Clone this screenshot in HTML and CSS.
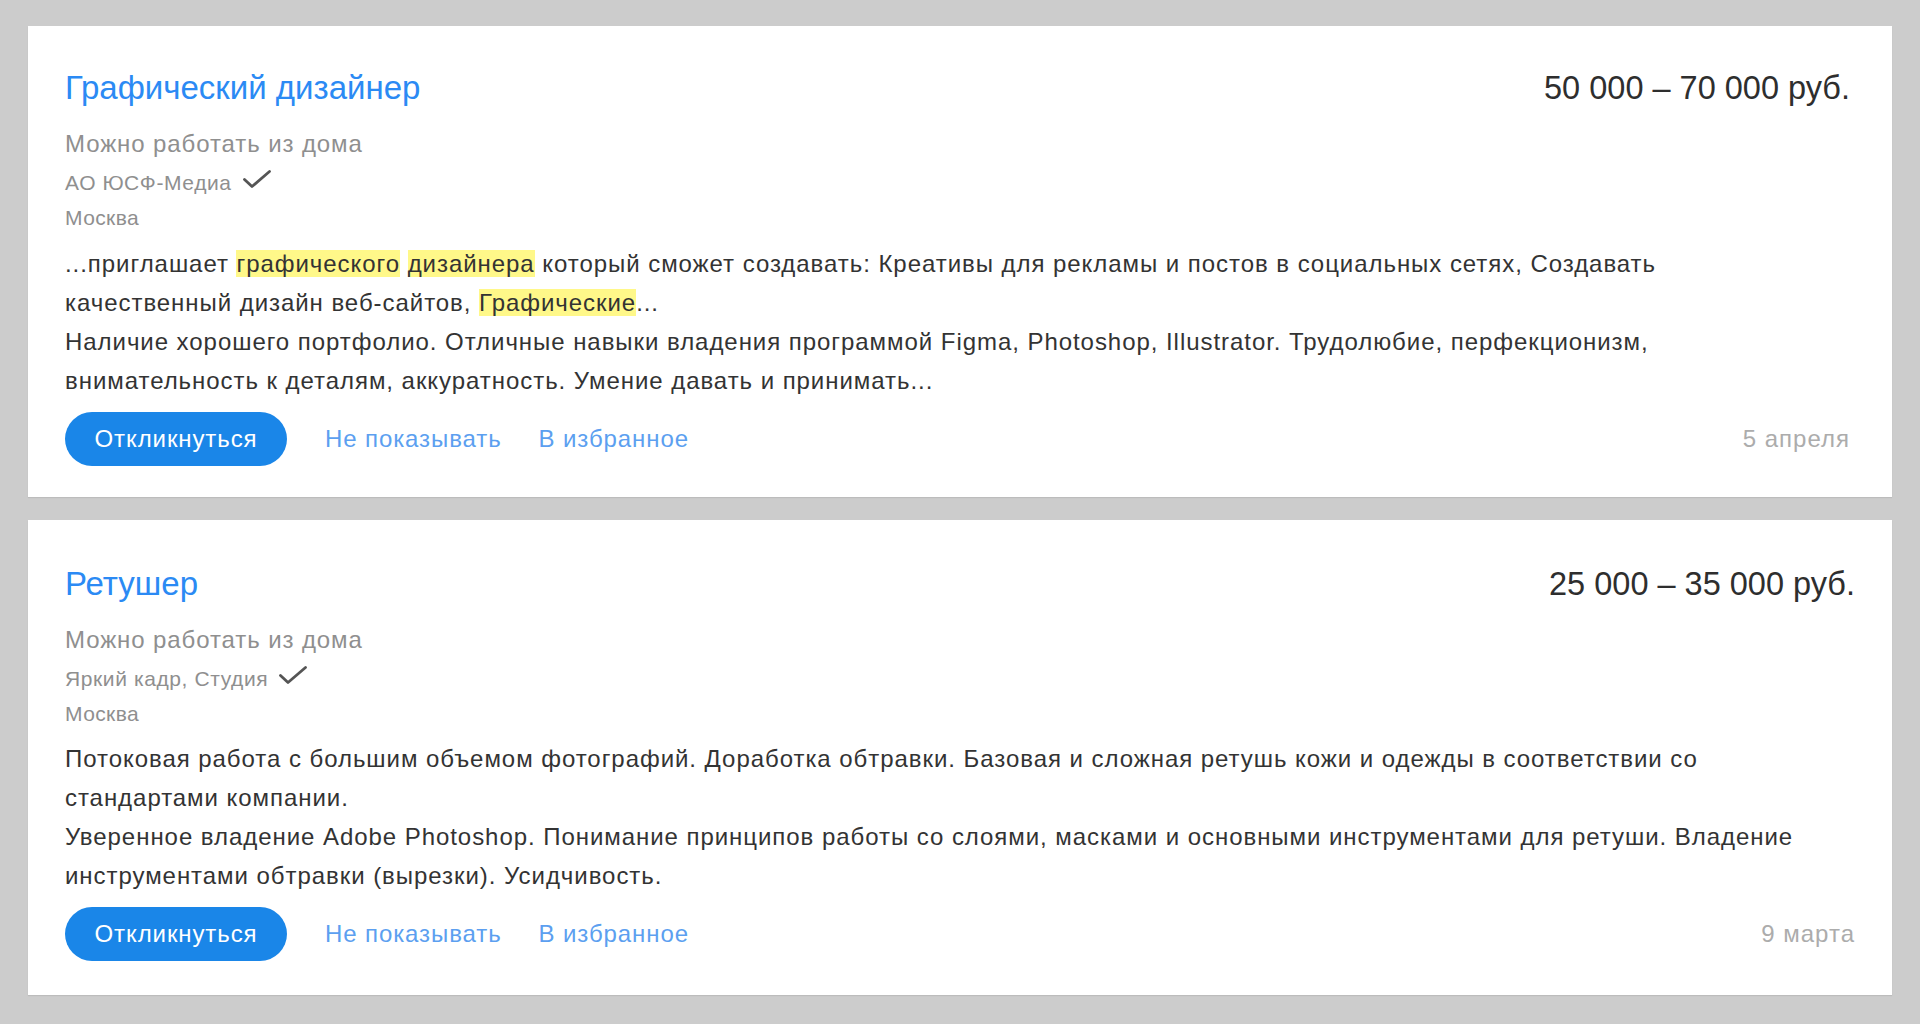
FILE: index.html
```html
<!DOCTYPE html>
<html lang="ru">
<head>
<meta charset="utf-8">
<title>Вакансии</title>
<link rel="stylesheet" href="styles.css">
</head>
<body>
<main class="page">
  <article class="vacancy vacancy--first">
    <div class="vacancy__head">
      <a class="vacancy__title" href="#">Графический дизайнер</a>
      <div class="vacancy__salary">50&nbsp;000 – 70&nbsp;000 руб.</div>
    </div>
    <div class="vacancy__remote">Можно работать из дома</div>
    <div class="vacancy__company">АО ЮСФ-Медиа<svg class="check" viewBox="0 0 28 18" width="28" height="18"><path d="M1.5 9.5 L9 16.5 L26.5 1.5" fill="none" stroke="#555" stroke-width="2.8" stroke-linecap="round" stroke-linejoin="round"/></svg></div>
    <div class="vacancy__city">Москва</div>
    <div class="vacancy__desc">
      <p>...приглашает <mark>графического</mark> <mark>дизайнера</mark> который сможет создавать: Креативы для рекламы и постов в социальных сетях, Создавать качественный дизайн веб-сайтов, <mark>Графические</mark>...</p>
      <p>Наличие хорошего портфолио. Отличные навыки владения программой Figma, Photoshop, Illustrator. Трудолюбие, перфекционизм, внимательность к деталям, аккуратность. Умение давать и принимать...</p>
    </div>
    <div class="vacancy__actions">
      <button class="btn" type="button">Откликнуться</button>
      <a class="action-link" href="#">Не показывать</a>
      <a class="action-link" href="#">В избранное</a>
      <span class="vacancy__date">5 апреля</span>
    </div>
  </article>

  <article class="vacancy vacancy--second">
    <div class="vacancy__head">
      <a class="vacancy__title" href="#">Ретушер</a>
      <div class="vacancy__salary">25&nbsp;000 – 35&nbsp;000 руб.</div>
    </div>
    <div class="vacancy__remote">Можно работать из дома</div>
    <div class="vacancy__company">Яркий кадр, Студия<svg class="check" viewBox="0 0 28 18" width="28" height="18"><path d="M1.5 9.5 L9 16.5 L26.5 1.5" fill="none" stroke="#555" stroke-width="2.8" stroke-linecap="round" stroke-linejoin="round"/></svg></div>
    <div class="vacancy__city">Москва</div>
    <div class="vacancy__desc">
      <p>Потоковая работа с большим объемом фотографий. Доработка обтравки. Базовая и сложная ретушь кожи и одежды в соответствии со стандартами компании.</p>
      <p>Уверенное владение Adobe Photoshop. Понимание принципов работы со слоями, масками и основными инструментами для ретуши. Владение инструментами обтравки (вырезки). Усидчивость.</p>
    </div>
    <div class="vacancy__actions">
      <button class="btn" type="button">Откликнуться</button>
      <a class="action-link" href="#">Не показывать</a>
      <a class="action-link" href="#">В избранное</a>
      <span class="vacancy__date">9 марта</span>
    </div>
  </article>
</main>
</body>
</html>
```

FILE: styles.css
```css
html, body {
  margin: 0;
  padding: 0;
}

body {
  background: #cccccc;
  font-family: "Liberation Sans", Arial, sans-serif;
  color: #333333;
}

.page {
  display: flex;
  flex-direction: column;
  gap: 23px;
  padding: 26px 28px 28px 28px;
}

.vacancy {
  background: #ffffff;
  padding: 42px 42px 31px 37px;
  box-shadow: 0 1px 1px rgba(0, 0, 0, 0.08);
}

.vacancy--second {
  padding-right: 37px;
  padding-top: 44px;
  padding-bottom: 34px;
}

.vacancy__head {
  display: flex;
  justify-content: space-between;
  align-items: baseline;
  height: 40px;
  margin-bottom: 18px;
}

.vacancy__title {
  font-size: 33px;
  line-height: 40px;
  color: #2b8af4;
  text-decoration: none;
}

.vacancy__salary {
  font-size: 32.5px;
  line-height: 40px;
  color: #2e2e2e;
}

.vacancy__remote {
  font-size: 24px;
  line-height: 36px;
  letter-spacing: 0.9px;
  color: #8f8f8f;
  margin-bottom: 3px;
}

.vacancy__company,
.vacancy__city {
  font-size: 21px;
  line-height: 35px;
  color: #8f8f8f;
}

.vacancy__company {
  display: flex;
  align-items: center;
  letter-spacing: 0.6px;
}

.vacancy__city {
  letter-spacing: 0.4px;
}

.check {
  margin-left: 11px;
  margin-top: -8px;
}

.vacancy__desc {
  max-width: 1740px;
  margin-top: 9px;
  font-size: 24px;
  line-height: 39px;
  letter-spacing: 0.95px;
  color: #333333;
}

.vacancy--second .vacancy__desc {
  margin-top: 8px;
}

.vacancy__desc p {
  margin: 0;
}

.vacancy__desc mark {
  background: #fff889;
  color: #333333;
}

.vacancy__actions {
  display: flex;
  align-items: center;
  margin-top: 12px;
}

.btn {
  height: 54px;
  width: 222px;
  border: none;
  border-radius: 27px;
  background: #1a86e8;
  color: #ffffff;
  font-family: "Liberation Sans", Arial, sans-serif;
  font-size: 24px;
  letter-spacing: 0.9px;
  padding: 0;
  cursor: pointer;
}

.action-link {
  margin-left: 38px;
  font-size: 24px;
  letter-spacing: 0.9px;
  color: #5c9ff0;
  text-decoration: none;
}

.action-link + .action-link {
  margin-left: 37px;
}

.vacancy__date {
  margin-left: auto;
  font-size: 24px;
  letter-spacing: 1px;
  color: #acacac;
}
```
